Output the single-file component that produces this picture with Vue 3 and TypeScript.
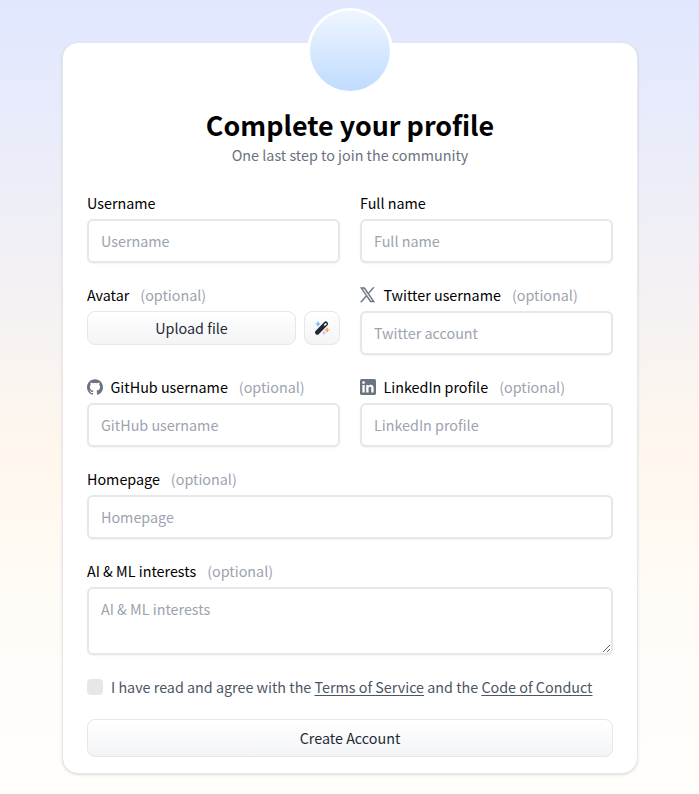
<script setup lang="ts">
import { ref } from 'vue'

const username = ref('')
const fullName = ref('')
const twitter = ref('')
const github = ref('')
const linkedin = ref('')
const homepage = ref('')
const interests = ref('')
const agreed = ref(false)
</script>

<template>
  <main class="page">
    <form class="card" @submit.prevent>
      <div class="portrait"></div>
      <h1>Complete your profile</h1>
      <p class="subtitle">One last step to join the community</p>

      <div class="fields">
        <label class="field">
          <span class="label">Username</span>
          <input v-model="username" class="control" type="text" placeholder="Username" />
        </label>
        <label class="field">
          <span class="label">Full name</span>
          <input v-model="fullName" class="control" type="text" placeholder="Full name" />
        </label>

        <div class="field">
          <span class="label">Avatar <span class="optional">(optional)</span></span>
          <div class="upload">
            <button class="btn upload-btn" type="button">Upload file</button>
            <button class="btn wand-btn" type="button">
              <svg width="16" height="16" viewBox="0 0 32 32">
                <path fill="#60a5fa" d="M6.800 3.500h2.400v3.300h3.300v2.400H9.200v3.300H6.800V9.200H3.500V6.800h3.300z" />
                <path fill="#fb923c" d="M24.800 15.500h2.400v3.300h3.300v2.400h-3.300v3.300h-2.400v-3.300h-3.300v-2.400h3.300z" />
                <circle cx="20" cy="26" r="2.800" fill="#f0abfc" />
                <path fill="#1f2937" fill-rule="evenodd" d="M20.700 4a4 4 0 0 1 5.700 0l.6.6a4 4 0 0 1 0 5.700L9.400 28.300a4 4 0 0 1-5.700 0l-.6-.6a4 4 0 0 1 0-5.700zm2 2.500l-3.400 3.400 2.300 2.300 3.400-3.400a1.600 1.600 0 0 0-2.300-2.300z" />
              </svg>
            </button>
          </div>
        </div>
        <label class="field">
          <span class="label">
            <svg class="brand" width="16" height="16" viewBox="0 0 24 24" fill="currentColor">
              <path stroke="currentColor" stroke-width="1" transform="translate(.5 .9) scale(.9)" d="M14.234 10.162 22.977 0h-2.072l-7.591 8.824L7.251 0H.258l9.168 13.343L.258 24H2.330l8.016-9.318L16.749 24h6.993zm-2.837 3.299-.929-1.329L3.076 1.560h3.182l5.965 8.532.929 1.329 7.754 11.090h-3.182z" />
            </svg>
            Twitter username <span class="optional">(optional)</span>
          </span>
          <input v-model="twitter" class="control" type="text" placeholder="Twitter account" />
        </label>

        <label class="field">
          <span class="label">
            <svg class="brand" width="16" height="16" viewBox="0 0 24 24" fill="currentColor">
              <path d="M12 .297c-6.630 0-12 5.373-12 12 0 5.303 3.438 9.800 8.205 11.385.6.113.82-.258.82-.577 0-.285-.010-1.040-.015-2.040-3.338.724-4.042-1.610-4.042-1.610C4.422 18.070 3.633 17.700 3.633 17.700c-1.087-.744.084-.729.084-.729 1.205.084 1.838 1.236 1.838 1.236 1.070 1.835 2.809 1.305 3.495.998.108-.776.417-1.305.76-1.605-2.665-.3-5.466-1.332-5.466-5.930 0-1.310.465-2.380 1.235-3.220-.135-.303-.54-1.523.105-3.176 0 0 1.005-.322 3.300 1.230.96-.267 1.980-.399 3-.405 1.020.006 2.040.138 3 .405 2.280-1.552 3.285-1.230 3.285-1.230.645 1.653.24 2.873.12 3.176.765.84 1.230 1.910 1.230 3.220 0 4.610-2.805 5.625-5.475 5.920.42.36.81 1.096.81 2.220 0 1.606-.015 2.896-.015 3.286 0 .315.21.69.825.57C20.565 22.092 24 17.592 24 12.297c0-6.627-5.373-12-12-12" />
            </svg>
            GitHub username <span class="optional">(optional)</span>
          </span>
          <input v-model="github" class="control" type="text" placeholder="GitHub username" />
        </label>
        <label class="field">
          <span class="label">
            <svg class="brand" width="16" height="16" viewBox="0 0 24 24">
              <rect width="24" height="24" rx="2.500" fill="currentColor" />
              <path fill="#fff" d="M3.600 9h3.500v11.300H3.600zM9.300 9h3.400v1.500c.6-1 1.800-1.800 3.500-1.800 3.400 0 4.200 2.200 4.200 5.200v6.400h-3.500v-5.600c0-1.500-.2-2.900-1.900-2.900-1.800 0-2.200 1.300-2.200 2.900v5.600H9.300z" />
              <circle cx="5.350" cy="5.400" r="2.050" fill="#fff" />
            </svg>
            LinkedIn profile <span class="optional">(optional)</span>
          </span>
          <input v-model="linkedin" class="control" type="text" placeholder="LinkedIn profile" />
        </label>

        <label class="field wide">
          <span class="label">Homepage <span class="optional">(optional)</span></span>
          <input v-model="homepage" class="control" type="text" placeholder="Homepage" />
        </label>
        <label class="field wide">
          <span class="label">AI &amp; ML interests <span class="optional">(optional)</span></span>
          <textarea v-model="interests" class="control area" placeholder="AI &amp; ML interests"></textarea>
        </label>
      </div>

      <label class="terms">
        <input v-model="agreed" class="check" type="checkbox" />
        <span>I have read and agree with the <a href="#">Terms of Service</a> and the <a href="#">Code of Conduct</a></span>
      </label>
      <button class="btn submit" type="submit">Create Account</button>
    </form>
  </main>
</template>

<style>
body {
  margin: 0;
}
</style>

<style scoped>
* {
  box-sizing: border-box;
}
.page {
  height: 794px;
  padding: 42px 61px 0 62px;
  overflow: hidden;
  background: linear-gradient(to bottom, #e0e7ff, #fff7ed 57%, #fffdfa 85%, #fffefb);
  font-family: "Source Sans Pro", "Noto Sans CJK SC", sans-serif;
  font-size: 14.33px;
  line-height: 24px;
  color: #000;
}
.card {
  display: flex;
  flex-direction: column;
  width: 576px;
  height: 732px;
  margin: 0 auto;
  padding: 0 24px;
  border: 1px solid #e5e7eb;
  border-radius: 16px;
  background: #fff;
  box-shadow: 0 1px 3px rgba(0, 0, 0, 0.1), 0 1px 2px -1px rgba(0, 0, 0, 0.1);
}
.portrait {
  flex: none;
  align-self: center;
  width: 80px;
  height: 80px;
  margin-top: -32px;
  border-radius: 50%;
  background: linear-gradient(to bottom, #eff6ff, #bfdbfe);
  box-shadow: 0 0 0 3px #fff;
}
h1 {
  margin: 18px 0 0;
  font-size: 26.86px;
  font-weight: 700;
  line-height: 32px;
  text-align: center;
}
.subtitle {
  margin: 2px 0 0;
  text-align: center;
  color: #6b7280;
}
.fields {
  display: grid;
  grid-template-columns: 1fr 1fr;
  gap: 20px;
  margin-top: 24px;
}
.field {
  display: flex;
  flex-direction: column;
  gap: 4px;
  min-width: 0;
}
.wide {
  grid-column: span 2;
}
.label {
  display: flex;
  align-items: center;
  height: 24px;
  white-space: nowrap;
}
.optional {
  margin-left: 11px;
  color: #9ca3af;
}
.brand {
  flex: none;
  margin-right: 7.5px;
  color: #6b7280;
}
.control {
  display: block;
  width: 100%;
  height: 44px;
  margin: 0;
  padding: 7px 12px 9px;
  border: 2px solid #e5e7eb;
  border-radius: 6px;
  outline: none;
  background: #fff;
  font: inherit;
  color: #000;
  box-shadow: 0 1px 2px rgba(0, 0, 0, 0.05);
}
.control::placeholder {
  color: #9ca3af;
  opacity: 1;
}
.area {
  height: 68px;
  padding: 8px 12px;
}
.upload {
  display: flex;
  gap: 8px;
}
.btn {
  display: flex;
  align-items: center;
  justify-content: center;
  height: 34px;
  padding: 0;
  border: 1px solid #e5e7eb;
  border-radius: 8px;
  background: linear-gradient(to bottom, #fff, #f3f4f6);
  font: inherit;
  color: #1f2937;
}
.upload-btn {
  flex: 1;
}
.wand-btn {
  width: 36px;
}
.terms {
  display: flex;
  align-items: center;
  gap: 8px;
  height: 24px;
  margin-top: 20px;
  white-space: nowrap;
  color: #4b5563;
}
.terms a {
  color: inherit;
  text-decoration: underline;
  text-underline-offset: 2px;
}
.check {
  flex: none;
  width: 16px;
  height: 16px;
  margin: 0;
  appearance: none;
  border-radius: 4px;
  background: #e5e7eb;
}
.check:checked {
  background: #4b5563;
}
.submit {
  flex: none;
  height: 38px;
  margin-top: 20px;
}
</style>
